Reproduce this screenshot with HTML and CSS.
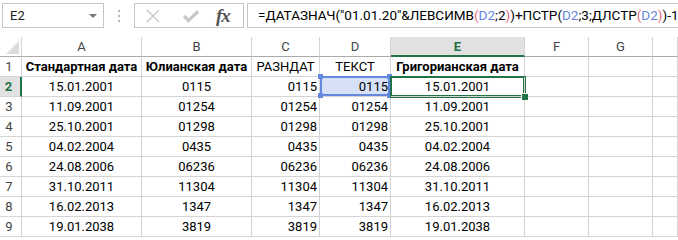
FILE: index.html
```html
<!DOCTYPE html>
<html>
<head>
  <title>Лист1</title>
  <link rel="stylesheet" href="styles.css">
</head>
<body>
  <div class="formula-bar">
    <div class="name-box">
      <span class="name-box-text">E2</span>
      <svg class="name-box-arrow" width="8" height="4" viewBox="0 0 8 4"><path d="M0 0h8L4 4z" fill="#777"/></svg>
    </div>
    <svg class="grip" width="4" height="14" viewBox="0 0 4 14">
      <rect x="1" y="1" width="2" height="2" fill="#b5b5b5"/>
      <rect x="1" y="6" width="2" height="2" fill="#b5b5b5"/>
      <rect x="1" y="11" width="2" height="2" fill="#b5b5b5"/>
    </svg>
    <div class="fx-buttons">
      <svg class="fx-icon" width="16" height="16" viewBox="0 0 16 16"><path d="M2 2l12 12M14 2L2 14" stroke="#c8c8c8" stroke-width="1.4" fill="none"/></svg>
      <svg class="fx-icon" width="20" height="16" viewBox="0 0 20 16"><path d="M3 8l4.5 4.5L17 3.5" stroke="#c8c8c8" stroke-width="3.2" fill="none"/></svg>
      <span class="fx-label">fx</span>
    </div>
    <div class="formula-input">=ДАТАЗНАЧ("01.01.20"&amp;ЛЕВСИМВ<span class="paren">(</span><span class="ref">D2</span>;2<span class="paren">)</span>)+ПСТР(<span class="ref">D2</span>;3;ДЛСТР<span class="paren">(</span><span class="ref">D2</span><span class="paren">)</span>)-1</div>
  </div>

  <div class="sheet">
    <div class="hdr corner"></div>
    <div class="hdr col">A</div>
    <div class="hdr col">B</div>
    <div class="hdr col">C</div>
    <div class="hdr col">D</div>
    <div class="hdr col active">E</div>
    <div class="hdr col">F</div>
    <div class="hdr col">G</div>
    <div class="hdr col"></div>

    <div class="hdr row">1</div>
    <div class="cell center bold">Стандартная дата</div>
    <div class="cell center bold">Юлианская дата</div>
    <div class="cell center">РАЗНДАТ</div>
    <div class="cell center">ТЕКСТ</div>
    <div class="cell center bold">Григорианская дата</div>
    <div class="cell"></div><div class="cell"></div><div class="cell"></div>

    <div class="hdr row active">2</div>
    <div class="cell center">15.01.2001</div>
    <div class="cell center">0115</div>
    <div class="cell right">0115</div>
    <div class="cell right ref-range">0115<span class="h tl"></span><span class="h tr"></span><span class="h bl"></span><span class="h br"></span></div>
    <div class="cell center current">15.01.2001</div>
    <div class="cell"></div><div class="cell"></div><div class="cell"></div>

    <div class="hdr row">3</div>
    <div class="cell center">11.09.2001</div>
    <div class="cell center">01254</div>
    <div class="cell right">01254</div>
    <div class="cell right">01254</div>
    <div class="cell center">11.09.2001</div>
    <div class="cell"></div><div class="cell"></div><div class="cell"></div>

    <div class="hdr row">4</div>
    <div class="cell center">25.10.2001</div>
    <div class="cell center">01298</div>
    <div class="cell right">01298</div>
    <div class="cell right">01298</div>
    <div class="cell center">25.10.2001</div>
    <div class="cell"></div><div class="cell"></div><div class="cell"></div>

    <div class="hdr row">5</div>
    <div class="cell center">04.02.2004</div>
    <div class="cell center">0435</div>
    <div class="cell right">0435</div>
    <div class="cell right">0435</div>
    <div class="cell center">04.02.2004</div>
    <div class="cell"></div><div class="cell"></div><div class="cell"></div>

    <div class="hdr row">6</div>
    <div class="cell center">24.08.2006</div>
    <div class="cell center">06236</div>
    <div class="cell right">06236</div>
    <div class="cell right">06236</div>
    <div class="cell center">24.08.2006</div>
    <div class="cell"></div><div class="cell"></div><div class="cell"></div>

    <div class="hdr row">7</div>
    <div class="cell center">31.10.2011</div>
    <div class="cell center">11304</div>
    <div class="cell right">11304</div>
    <div class="cell right">11304</div>
    <div class="cell center">31.10.2011</div>
    <div class="cell"></div><div class="cell"></div><div class="cell"></div>

    <div class="hdr row">8</div>
    <div class="cell center">16.02.2013</div>
    <div class="cell center">1347</div>
    <div class="cell right">1347</div>
    <div class="cell right">1347</div>
    <div class="cell center">16.02.2013</div>
    <div class="cell"></div><div class="cell"></div><div class="cell"></div>

    <div class="hdr row">9</div>
    <div class="cell center">19.01.2038</div>
    <div class="cell center">3819</div>
    <div class="cell right">3819</div>
    <div class="cell right">3819</div>
    <div class="cell center">19.01.2038</div>
    <div class="cell"></div><div class="cell"></div><div class="cell"></div>
  </div>
</body>
</html>
```

FILE: styles.css
```css
:root {
  --grid: #d4d4d4;
  --hdr-line: #ababab;
  --hdr-text: #444444;
  --green: #217346;
  --ref-blue: #6488dc;
  --ref-fill: #d6e0f6;
  --paren: #e8657a;
}

body {
  margin: 0;
  width: 678px;
  height: 240px;
  overflow: hidden;
  background: #ffffff;
  font-family: Roboto, "Liberation Sans", sans-serif;
  font-size: 13px;
  color: #000000;
}

/* formula bar */

.formula-bar {
  display: flex;
  align-items: flex-start;
  height: 37px;
  padding-top: 3px;
  box-sizing: border-box;
}

.name-box {
  display: flex;
  align-items: center;
  justify-content: space-between;
  width: 102px;
  height: 25px;
  margin-left: 2px;
  padding: 0 6px 0 7px;
  box-sizing: border-box;
  border: 1px solid #c6c6c6;
}

.name-box-text {
  font-size: 13px;
  color: #222;
}

.grip {
  margin: 6px 0 0 13px;
}

.fx-buttons {
  display: flex;
  align-items: center;
  width: 110px;
  height: 25px;
  margin-left: 13px;
  padding-left: 10px;
  box-sizing: border-box;
  border: 1px solid #c6c6c6;
}

.fx-icon {
  margin-right: 20px;
}

.fx-icon + .fx-icon {
  margin-right: 15px;
}

.fx-label {
  font-family: "Liberation Serif", serif;
  font-style: italic;
  font-weight: bold;
  font-size: 19px;
  color: #555;
  letter-spacing: -1px;
  line-height: 22px;
}

.formula-input {
  flex: 1;
  min-width: 0;
  height: 25px;
  margin-left: 3px;
  padding-left: 10px;
  box-sizing: border-box;
  border: 1px solid #c6c6c6;
  border-right: none;
  line-height: 22px;
  white-space: nowrap;
  overflow: hidden;
  font-size: 13.5px;
}

.ref {
  color: var(--ref-blue);
}

.paren {
  color: var(--paren);
}

/* sheet grid */

.sheet {
  display: grid;
  grid-template-columns: 22px 120px 110px 68px 71px 134px 64px 64px 1fr;
  grid-auto-rows: 20px;
}

.hdr,
.cell {
  box-sizing: border-box;
  border-right: 1px solid var(--grid);
  border-bottom: 1px solid var(--grid);
  line-height: 20px;
  white-space: nowrap;
  overflow: visible;
}

.hdr {
  color: var(--hdr-text);
  text-align: center;
}

.hdr.col {
  border-bottom-color: var(--hdr-line);
}

.hdr.corner {
  position: relative;
  border-bottom-color: var(--hdr-line);
}

.hdr.corner::after {
  content: "";
  position: absolute;
  right: 2px;
  bottom: 2px;
  border-style: solid;
  border-width: 0 0 13px 13px;
  border-color: transparent transparent #dcdcdc transparent;
}

.hdr.row {
  text-align: center;
  padding-right: 3px;
}

.hdr.active {
  background: #e1e1e1;
  color: var(--green);
  font-weight: bold;
}

.hdr.col.active {
  border-bottom: 2px solid var(--green);
}

.hdr.row.active {
  border-right: 2px solid var(--green);
}

.cell {
  padding: 0 2px;
}

.center {
  text-align: center;
}

.right {
  text-align: right;
}

.bold {
  font-weight: bold;
}

/* selections */

.ref-range {
  position: relative;
  background: var(--ref-fill);
  box-shadow: inset 0 0 0 2px var(--ref-blue);
  margin-top: -1px;
  padding-top: 1px;
}

.h {
  position: absolute;
  width: 5px;
  height: 5px;
  background: var(--ref-blue);
}

.h.tl { left: -2px; top: -2px; }
.h.tr { right: -2px; top: -2px; }
.h.bl { left: -2px; bottom: -2px; }
.h.br { right: -2px; bottom: -2px; }

.current {
  position: relative;
  box-shadow: 0 0 0 1px var(--green), inset 0 0 0 1px var(--green);
  z-index: 1;
}

.current::after {
  content: "";
  position: absolute;
  right: -4px;
  bottom: -4px;
  width: 6px;
  height: 6px;
  background: var(--green);
  border: 1px solid #ffffff;
  border-right: none;
  border-bottom: none;
}
```
